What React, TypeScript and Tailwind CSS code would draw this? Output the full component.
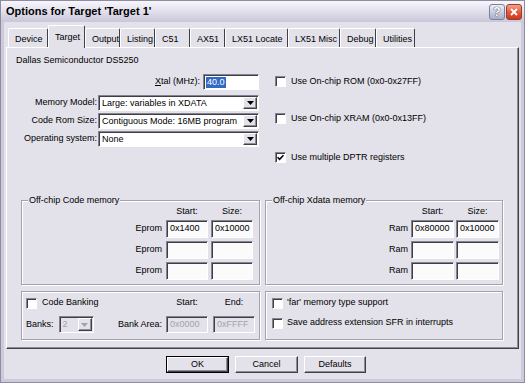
import React from "react";

const tabs = [
  { label: "Device", w: "w-[40px]" },
  { label: "Target", w: "w-[37px]", active: true },
  { label: "Output", w: "w-[35px]" },
  { label: "Listing", w: "w-[35px]" },
  { label: "C51", w: "w-[35px]" },
  { label: "AX51", w: "w-[35px]" },
  { label: "LX51 Locate", w: "w-[63px]" },
  { label: "LX51 Misc", w: "w-[52px]" },
  { label: "Debug", w: "w-[36px]" },
  { label: "Utilities", w: "w-[39px]" },
];

const Arrow = ({ disabled = false }: { disabled?: boolean }) => (
  <div className="w-[14px] h-full flex items-center justify-center bg-[#e3e1e9] border border-t-white border-l-white border-r-[#404040] border-b-[#404040] shadow-[inset_-1px_-1px_0_#8f8d99]">
    <svg width="7" height="4" viewBox="0 0 7 4">
      <path d="M0 0h7L3.5 4z" fill={disabled ? "#a3a1ad" : "#000"} />
    </svg>
  </div>
);

const Select = ({ value, className = "", disabled = false }: { value: string; className?: string; disabled?: boolean }) => (
  <div
    className={`h-[16px] flex items-stretch p-[1px] border border-t-[#858390] border-l-[#858390] border-b-white border-r-white shadow-[inset_1px_1px_0_#3f3e47] ${
      disabled ? "bg-[#e3e1e9] text-[#a3a1ad]" : "bg-white"
    } ${className}`}
  >
    <span className="flex-1 pl-[2px] leading-[12px] whitespace-nowrap overflow-hidden">{value}</span>
    <Arrow disabled={disabled} />
  </div>
);

const Field = ({ value = "", className = "", disabled = false }: { value?: string; className?: string; disabled?: boolean }) => (
  <div
    className={`flex items-center pl-[3px] border border-t-[#858390] border-l-[#858390] border-b-white border-r-white shadow-[inset_1px_1px_0_#3f3e47] ${
      disabled ? "bg-[#e3e1e9] text-[#a3a1ad]" : "bg-[#fbfbfc]"
    } ${className}`}
  >
    {value}
  </div>
);

const Check = ({ checked = false }: { checked?: boolean }) => (
  <div className="w-[11px] h-[11px] shrink-0 bg-white border border-t-[#858390] border-l-[#858390] border-b-white border-r-white shadow-[inset_1px_1px_0_#3f3e47] flex items-center justify-center">
    {checked && (
      <svg width="7" height="7" viewBox="0 0 7 7">
        <path d="M0.5 3.2L2.6 5.3L6.5 1.2" stroke="#000" strokeWidth="1.6" fill="none" />
      </svg>
    )}
  </div>
);

const Group = ({ title, className = "", children }: { title?: string; className?: string; children: React.ReactNode }) => (
  <div className={`relative border border-[#a3a1ad] shadow-[inset_1px_1px_0_#fff,1px_1px_0_#fff] ${className}`}>
    {title && (
      <span className="absolute -top-[7px] left-[6px] px-[1px] bg-[#e3e1e9] leading-[12px]">{title}</span>
    )}
    {children}
  </div>
);

const Button = ({ label, def = false, className = "" }: { label: string; def?: boolean; className?: string }) => (
  <div className={`h-[17px] ${def ? "border border-black" : ""} ${className}`}>
    <div className="h-full flex items-center justify-center border border-t-white border-l-white border-r-[#404040] border-b-[#404040] shadow-[inset_-1px_-1px_0_#8f8d99]">
      {label}
    </div>
  </div>
);

const MemRows = ({ label, start, size, w, gap }: { label: string; start: string; size: string; w: string; gap: string }) => (
  <>
    <div className={`flex justify-end ${gap} leading-[12px] mt-[3px]`}>
      <span className={`${w} text-center`}>Start:</span>
      <span className={`${w} text-center`}>Size:</span>
    </div>
    {[0, 1, 2].map((i) => (
      <div key={i} className={`flex items-center justify-end ${gap} mt-[3px]`}>
        <span className="mr-[1px]">{label}</span>
        <Field value={i === 0 ? start : ""} className={`${w} h-[18px]`} />
        <Field value={i === 0 ? size : ""} className={`${w} h-[18px]`} />
      </div>
    ))}
  </>
);

export default function App() {
  return (
    <div className="w-[525px] h-[383px] flex flex-col overflow-hidden border border-[#8e8ca3] bg-[#cdcbdb] font-['Liberation_Sans',Arial,sans-serif] text-[9px] text-black">
      {/* Title bar */}
      <div className="h-[21px] shrink-0 flex items-center justify-between bg-gradient-to-b from-[#f7f6fb] via-[#e2e0ec] to-[#c8c6d8]">
        <span className="pl-[5px] text-[11px] font-bold">Options for Target 'Target 1'</span>
        <div className="flex gap-[1px] pr-[2px]">
          <div className="w-[16px] h-[16px] rounded-[3px] border border-[#7c809c] bg-gradient-to-b from-[#eef0f7] to-[#a9afc7] flex items-center justify-center text-[12px] font-bold text-white [text-shadow:0_0_1px_#3a3f5c,0_0_1px_#3a3f5c]">
            ?
          </div>
          <div className="w-[16px] h-[16px] rounded-[3px] border border-[#9b3a2c] bg-gradient-to-b from-[#f3a48a] via-[#e35b3c] to-[#c8391f] flex items-center justify-center">
            <svg width="8" height="8" viewBox="0 0 8 8">
              <path d="M1 1L7 7M7 1L1 7" stroke="#fff" strokeWidth="1.8" />
            </svg>
          </div>
        </div>
      </div>

      {/* Body */}
      <div className="flex-1 flex flex-col mx-[3px] mb-[3px] px-[2px] bg-[#e3e1e9]">
        {/* Tabs */}
        <div className="h-[25px] shrink-0 flex items-end pl-[2px]">
          {tabs.map((t) =>
            t.active ? (
              <div
                key={t.label}
                className={`${t.w} h-[23px] -mb-px relative z-10 bg-[#e3e1e9] pl-[6px] pt-[5px] leading-[12px] whitespace-nowrap border-t border-l border-r border-t-white border-l-white border-r-[#404040] rounded-t-[2px]`}
              >
                {t.label}
              </div>
            ) : (
              <div
                key={t.label}
                className={`${t.w} h-[19px] pl-[6px] pt-[4px] leading-[12px] whitespace-nowrap border-t border-l border-r border-t-white border-l-white border-r-[#404040] rounded-t-[2px]`}
              >
                {t.label}
              </div>
            )
          )}
        </div>

        {/* Panel */}
        <div className="h-[302px] shrink-0 border border-t-white border-l-white border-r-[#404040] border-b-[#404040] shadow-[inset_-1px_-1px_0_#8f8d99]">
          <div className="flex">
            <div className="w-[252px] pl-[9px] pt-[6px]">
              <div className="leading-[12px]">Dallas Semiconductor DS5250</div>
              <div className="mt-[8px] h-[16px] flex items-center justify-end">
                <span className="mr-[3px]">
                  <span className="underline">X</span>tal (MHz):
                </span>
                <div className="w-[56px] h-[16px] flex items-center pl-[2px] bg-white border border-t-[#858390] border-l-[#858390] border-b-white border-r-white shadow-[inset_1px_1px_0_#3f3e47]">
                  <span className="bg-[#316ac5] text-white leading-[11px] px-[1px]">40.0</span>
                </div>
              </div>
              <div className="mt-[5px] flex items-center">
                <span className="w-[82px] text-right pr-[1px]">Memory Model:</span>
                <Select value="Large: variables in XDATA" className="flex-1" />
              </div>
              <div className="mt-[2px] flex items-center">
                <span className="w-[82px] text-right pr-[1px]">Code Rom Size:</span>
                <Select value="Contiguous Mode: 16MB program" className="flex-1" />
              </div>
              <div className="mt-[2px] flex items-center">
                <span className="w-[82px] text-right pr-[1px]">Operating system:</span>
                <Select value="None" className="flex-1" />
              </div>
            </div>
            <div className="ml-[16px] pt-[28px] flex flex-col">
              <div className="h-[11px] flex items-center gap-[5px]">
                <Check />
                <span>Use On-chip ROM (0x0-0x27FF)</span>
              </div>
              <div className="mt-[26px] h-[11px] flex items-center gap-[5px]">
                <Check />
                <span>Use On-chip XRAM (0x0-0x13FF)</span>
              </div>
              <div className="mt-[28px] h-[11px] flex items-center gap-[5px]">
                <Check checked />
                <span>Use multiple DPTR registers</span>
              </div>
            </div>
          </div>

          {/* Memory groups */}
          <div className="mt-[37px] flex gap-[5px] pl-[14px]">
            <Group title="Off-chip Code memory" className="w-[239px] h-[85px] pt-[1px] pr-[6px]">
              <MemRows label="Eprom" start="0x1400" size="0x10000" w="w-[42px]" gap="gap-[3px]" />
            </Group>
            <Group title="Off-chip Xdata memory" className="w-[238px] h-[85px] pt-[1px] pr-[3px]">
              <MemRows label="Ram" start="0x80000" size="0x10000" w="w-[43px]" gap="gap-[2px]" />
            </Group>
          </div>

          <div className="mt-[6px] flex gap-[5px] pl-[14px]">
            <Group className="w-[239px] h-[49px] pt-[5px] pl-[4px] pr-[4px]">
              <div className="h-[12px] flex items-center">
                <Check />
                <span className="ml-[5px] flex-1">Code Banking</span>
                <span className="w-[42px] text-center">Start:</span>
                <span className="w-[42px] ml-[5px] text-center">End:</span>
              </div>
              <div className="mt-[7px] h-[17px] flex items-center">
                <span>Banks:</span>
                <Select value="2" disabled className="ml-[5px] w-[35px] h-[17px]" />
                <span className="flex-1 text-right mr-[4px]">Bank Area:</span>
                <Field value="0x0000" disabled className="w-[42px] h-[17px]" />
                <Field value="0xFFFF" disabled className="w-[42px] h-[17px] ml-[5px]" />
              </div>
            </Group>
            <Group className="w-[238px] h-[49px] pt-[5px] pl-[6px]">
              <div className="h-[12px] flex items-center gap-[4px]">
                <Check />
                <span>'far' memory type support</span>
              </div>
              <div className="mt-[8px] h-[12px] flex items-center gap-[4px]">
                <Check />
                <span>Save address extension SFR in interrupts</span>
              </div>
            </Group>
          </div>
        </div>

        {/* Buttons */}
        <div className="mt-[7px] flex gap-[6px] pl-[160px]">
          <Button label="OK" def className="w-[63px]" />
          <Button label="Cancel" className="w-[63px]" />
          <Button label="Defaults" className="w-[62px]" />
        </div>
      </div>
    </div>
  );
}
